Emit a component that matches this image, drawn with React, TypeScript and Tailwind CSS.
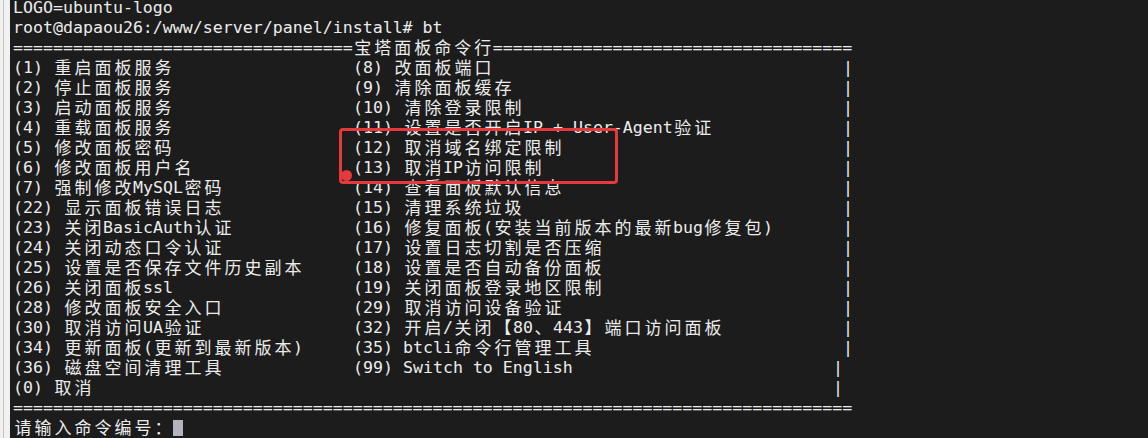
import React from "react";

function isWide(ch: string): boolean {
  const c = ch.codePointAt(0) ?? 0;
  return c >= 0x2e80;
}

function Text({ s }: { s: string }) {
  const parts: React.ReactNode[] = [];
  let buf = "";
  let k = 0;
  for (const ch of Array.from(s)) {
    if (isWide(ch)) {
      if (buf) {
        parts.push(<span key={k++}>{buf}</span>);
        buf = "";
      }
      parts.push(
        <span
          key={k++}
          className="inline-block h-[20px] w-[20px] align-top text-center font-['Noto_Sans_CJK_SC',sans-serif] text-[17px] leading-[17px]"
        >
          {ch}
        </span>
      );
    } else {
      buf += ch;
    }
  }
  if (buf) parts.push(<span key={k++}>{buf}</span>);
  return <>{parts}</>;
}

function Line({ s }: { s: string }) {
  return (
    <div className="h-[20px] whitespace-pre">
      <Text s={s} />
    </div>
  );
}

function Row({ left, right, narrow }: { left: string; right: string; narrow?: boolean }) {
  return (
    <div className="flex h-[20px] whitespace-pre">
      <div className="w-[340px] shrink-0">
        <Text s={left} />
      </div>
      <div className={narrow ? "w-[480px] shrink-0" : "w-[490px] shrink-0"}>
        <Text s={right} />
      </div>
      <span>|</span>
    </div>
  );
}

const rows: [string, string, boolean?][] = [
  ["(1) 重启面板服务", "(8) 改面板端口"],
  ["(2) 停止面板服务", "(9) 清除面板缓存"],
  ["(3) 启动面板服务", "(10) 清除登录限制"],
  ["(4) 重载面板服务", "(11) 设置是否开启IP + User-Agent验证"],
  ["(5) 修改面板密码", "(12) 取消域名绑定限制"],
  ["(6) 修改面板用户名", "(13) 取消IP访问限制"],
  ["(7) 强制修改MySQL密码", "(14) 查看面板默认信息"],
  ["(22) 显示面板错误日志", "(15) 清理系统垃圾"],
  ["(23) 关闭BasicAuth认证", "(16) 修复面板(安装当前版本的最新bug修复包)"],
  ["(24) 关闭动态口令认证", "(17) 设置日志切割是否压缩"],
  ["(25) 设置是否保存文件历史副本", "(18) 设置是否自动备份面板"],
  ["(26) 关闭面板ssl", "(19) 关闭面板登录地区限制"],
  ["(28) 修改面板安全入口", "(29) 取消访问设备验证"],
  ["(30) 取消访问UA验证", "(32) 开启/关闭【80、443】端口访问面板"],
  ["(34) 更新面板(更新到最新版本)", "(35) btcli命令行管理工具"],
  ["(36) 磁盘空间清理工具", "(99) Switch to English", true],
  ["(0) 取消", "", true],
];

export default function App() {
  return (
    <div className="flex h-[438px] w-[1148px] overflow-hidden bg-[#1c1c1c]">
      <div className="flex h-full w-[10px] shrink-0 bg-[#f0f0f0]">
        <div className="ml-[3px] h-full w-px bg-[#c4c4c4]" />
      </div>
      <div className="relative flex-1 pl-[3px] font-['DejaVu_Sans_Mono',monospace] text-[16.6px] leading-[20px] text-[#ececec]">
        <div className="-mt-[2px] flex flex-col">
          <Line s="LOGO=ubuntu-logo" />
          <Line s="root@dapaou26:/www/server/panel/install# bt" />
          <Line s={"=".repeat(34) + "宝塔面板命令行" + "=".repeat(36)} />
          {rows.map(([l, r, n], i) => (
            <Row key={i} left={l} right={r} narrow={n} />
          ))}
          <Line s={"=".repeat(84)} />
          <div className="flex h-[20px] items-center whitespace-pre">
            <Text s="请输入命令编号：" />
            <span className="inline-block h-[16px] w-[10px] bg-[#b4b4c0]" />
          </div>
        </div>
        <div className="absolute left-[329px] top-[128px] h-[56px] w-[279px] rounded-[4px] border-[3px] border-[#e5393c]" />
        <div className="absolute left-[331px] top-[170px] h-[11px] w-[11px] rounded-full bg-[#e5393c]" />
      </div>
    </div>
  );
}
